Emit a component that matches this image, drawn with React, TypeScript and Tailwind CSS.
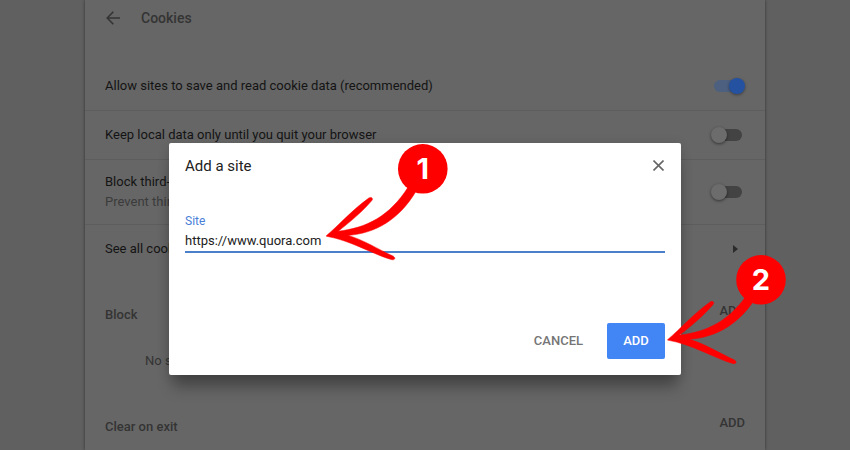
import type { ReactNode } from "react";

function Toggle({ on = false }: { on?: boolean }) {
  return on ? (
    <div className="mr-[3px] flex h-3 w-7 items-center justify-end rounded-full bg-[#4d6080]">
      <div className="-mr-[3px] h-4 w-4 shrink-0 rounded-full bg-[#2552a0] shadow-[0_1px_3px_rgba(0,0,0,0.4)]" />
    </div>
  ) : (
    <div className="mr-[3px] flex h-3 w-7 items-center rounded-full bg-[#434343]">
      <div className="-ml-[3px] h-4 w-4 shrink-0 rounded-full bg-[#6c6c6c] shadow-[0_1px_3px_rgba(0,0,0,0.5)]" />
    </div>
  );
}

function Row({ className, children }: { className: string; children: ReactNode }) {
  return (
    <div className={`flex items-center justify-between border-b border-[#5d5d5d] px-5 ${className}`}>
      {children}
    </div>
  );
}

function Marker({
  label,
  tipX,
  tipY,
  cx,
  cy,
}: {
  label: string;
  tipX: number;
  tipY: number;
  cx: number;
  cy: number;
}) {
  return (
    <g fill="#fe0000">
      <path
        transform={`translate(${tipX} ${tipY})`}
        stroke="#fe0000"
        strokeWidth="0.5"
        strokeLinejoin="round"
        d="M0 0C13 -11 27 -27 42.5 -37.8C45 -39.3 47.3 -37.5 45.5 -35.2C37 -25 24 -14 12 -4.6C40 -8 63 -19 82 -49L90 -45C73 -16 49 -2.5 22 -.4C38 4.5 51 13 67 20.4C69.8 22.4 68.5 24.6 65 23.8C48 19 24 4.5 0 0.4Z"
      />
      <circle cx={cx} cy={cy} r="24.8" />
      <text
        x={cx}
        y={cy + 10.2}
        textAnchor="middle"
        fill="#ffffff"
        className="font-[Inter,sans-serif] text-[29px] font-bold"
      >
        {label}
      </text>
    </g>
  );
}

export default function App() {
  return (
    <div className="relative h-[450px] w-[850px] overflow-hidden bg-[#606060] font-[Roboto,sans-serif] text-[13px] leading-5 text-[#141414]">
      <div className="mx-auto h-full w-[680px] bg-[#666666] shadow-[0_0_3px_rgba(0,0,0,0.5)]">
        <div className="flex h-9 items-center gap-[21px] pl-[21px] text-[14px] font-medium text-[#343434]">
          <svg width="14" height="14" viewBox="0 0 14 14" fill="none" stroke="currentColor" strokeWidth="1.6">
            <path d="M14 7H1.5M7.3 .7L1.2 7L7.3 13.3" />
          </svg>
          <span>Cookies</span>
        </div>
        <Row className="mt-[25px] h-[50px]">
          <span>Allow sites to save and read cookie data (recommended)</span>
          <Toggle on />
        </Row>
        <Row className="h-[49px]">
          <span>Keep local data only until you quit your browser</span>
          <Toggle />
        </Row>
        <Row className="h-[65px]">
          <div>
            <div>Block third-party cookies</div>
            <div className="text-[#3b3b3b]">Prevent third-party websites from saving and reading cookie data</div>
          </div>
          <Toggle />
        </Row>
        <div className="flex h-12 items-center justify-between px-5">
          <span>See all cookies and site data</span>
          <svg className="mr-[7px]" width="5" height="8" viewBox="0 0 5 8" fill="#2b2b2b">
            <path d="M0 0L5 4L0 8Z" />
          </svg>
        </div>
        <div className="mt-7 flex items-start justify-between px-5 font-medium text-[#343434]">
          <span className="pt-1">Block</span>
          <span>ADD</span>
        </div>
        <div className="mt-[26px] pl-[60px] text-[#343434]">No sites added</div>
        <div className="mt-[42px] flex items-start justify-between px-5 font-medium text-[#343434]">
          <span className="pt-1">Clear on exit</span>
          <span>ADD</span>
        </div>
      </div>

      <div className="absolute top-[143px] left-[169px] flex h-[232px] w-[512px] flex-col rounded-[2px] bg-white px-4 shadow-[0_16px_14px_-4px_rgba(0,0,0,0.3),0_2px_12px_rgba(0,0,0,0.14)]">
        <div className="flex h-[46px] items-center justify-between text-[15px] text-[#212121]">
          <span>Add a site</span>
          <svg className="-mt-[2px] mr-px" width="11" height="11" viewBox="0 0 11 11" fill="none" stroke="#666666" strokeWidth="1.6">
            <path d="M.5 .5L10.5 10.5M10.5 .5L.5 10.5" />
          </svg>
        </div>
        <label className="mt-[22px] text-[12px] text-[#4a80d8]">Site</label>
        <div className="h-[22px] border-b-2 border-[#4c7fc9] text-[13px] text-[#212121]">https://www.quora.com</div>
        <div className="mt-auto mb-4 flex items-center justify-end gap-6 font-medium">
          <span className="text-[#757575]">CANCEL</span>
          <button className="h-9 w-[58px] rounded-[2px] bg-[#4285f4] text-white">ADD</button>
        </div>
      </div>

      <svg className="absolute inset-0" width="850" height="450" viewBox="0 0 850 450">
        <Marker label="1" tipX={326.3} tipY={235.8} cx={422.8} cy={168.8} />
        <Marker label="2" tipX={667.6} tipY={339.7} cx={761} cy={279.8} />
      </svg>
    </div>
  );
}
